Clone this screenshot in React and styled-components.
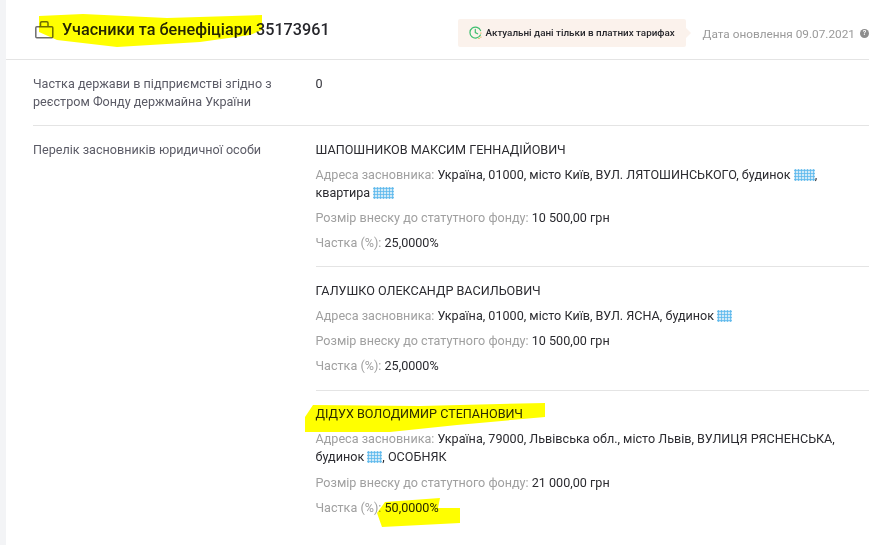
import React from "react";
import styled, { createGlobalStyle } from "styled-components";

const Global = createGlobalStyle`
  html, body { margin: 0; padding: 0; background: #fff; }
  body { font-family: Roboto, "Liberation Sans", sans-serif; overflow: hidden; }
`;
const Page = styled.div`
  position: relative;
  width: 869px;
  height: 545px;
  overflow: hidden;
  background: #fff;
  border-left: 6px solid #f3f4f6;
  box-sizing: border-box;
`;
const Header = styled.header`
  height: 59px;
  display: flex;
  align-items: center;
  padding: 0 0 0 29px;
  border-bottom: 1px solid #e4e4e4;
`;
const Title = styled.h1`
  margin: 0 0 0 8px;
  font-size: 16.2px;
  font-weight: 500;
  color: #26262b;
  line-height: 20px;
  white-space: nowrap;
`;
const Notice = styled.div`
  position: relative;
  margin-left: auto;
  margin-top: 6px;
  height: 28px;
  width: 228px;
  padding-left: 11px;
  box-sizing: border-box;
  display: flex;
  align-items: center;
  gap: 4px;
  background: #fbf2ec;
  border-radius: 2px;
  font-size: 9.85px;
  font-weight: 500;
  color: #26262b;
  white-space: nowrap;
  &::after {
    content: "";
    position: absolute;
    right: -5px;
    top: 9px;
    border-left: 5px solid #fbf2ec;
    border-top: 5px solid transparent;
    border-bottom: 5px solid transparent;
  }
`;
const Updated = styled.div`
  margin-left: 17px;
  margin-top: 8px;
  display: flex;
  align-items: center;
  gap: 5px;
  font-size: 11.8px;
  color: #9a9a9a;
  white-space: nowrap;
`;
const Help = styled.span`
  width: 9px;
  height: 9px;
  border-radius: 50%;
  background: #8d8d8d;
  color: #fff;
  font-size: 7px;
  font-weight: 700;
  line-height: 9px;
  text-align: center;
`;
const Row = styled.section`
  margin-left: 27px;
  display: grid;
  grid-template-columns: 282px 1fr;
  padding-top: ${p => p.$top}px;
  padding-bottom: ${p => p.$bottom}px;
  border-bottom: ${p => (p.$line ? "1px solid #e4e4e4" : "none")};
  font-size: 12.6px;
  line-height: 18px;
`;
const Label = styled.div`
  color: #5b5b66;
  width: 250px;
`;
const Value = styled.div`
  color: #33333a;
  padding-left: 0.5px;
`;
const Founder = styled.article`
  padding: 0 0 ${p => p.$bottom}px;
  margin-bottom: ${p => p.$after}px;
  border-bottom: ${p => (p.$line ? "1px solid #e4e4e4" : "none")};
  width: 560px;
  display: flex;
  flex-direction: column;
  gap: 7px;
`;
const Name = styled.div`
  color: #2b2b30;
`;
const Line = styled.div`
  color: #2b2b30;
  width: 530px;
  margin-bottom: ${p => p.$after || 0}px;
`;
const Key = styled.span`
  color: #a0a0a0;
`;
const Mask = styled.span`
  display: inline-block;
  width: ${p => p.$w}px;
  height: 12px;
  vertical-align: -2px;
  background-image: radial-gradient(circle at 1.5px 1.5px, #5fb9ec 0.9px, #e3f3fb 1.5px);
  background-size: 3px 3px;
`;
const Marks = styled.svg`
  position: absolute;
  left: -6px;
  top: 0;
  width: 869px;
  height: 545px;
  mix-blend-mode: multiply;
  pointer-events: none;
`;

const Briefcase = () => (
  <svg width="19" height="18" viewBox="0 0 19 18" fill="none" stroke="#6e6e6e" strokeWidth="1.5">
    <rect x="0.8" y="5.8" width="17" height="11" rx="1" />
    <path d="M5.5 5.8V2C5.5 1.3 6 .8 6.7.8h5.1c.7 0 1.2.5 1.2 1.2v3.8" />
  </svg>
);
const Clock = () => (
  <svg width="13" height="13" viewBox="0 0 13 13" fill="none" strokeWidth="1.2" strokeLinecap="round">
    <path d="M11.4 9A5.5 5.5 0 1 1 11.6 4.6" stroke="#3fbf6f" />
    <path d="M6.3 3.4V6.6L8.6 7.8" stroke="#3fbf6f" />
    <path d="M11.9 7v.1M11.9 11v.1M10 12.3v.1" stroke="#d8a12c" />
  </svg>
);

const App = () => (
  <Page>
    <Global />
    <Header>
      <Briefcase />
      <Title>Учасники та бенефіціари 35173961</Title>
      <Notice><Clock />Актуальні дані тільки в платних тарифах</Notice>
      <Updated>Дата оновлення 09.07.2021 <Help>?</Help></Updated>
    </Header>
    <Row $top={15} $bottom={14} $line>
      <Label>Частка держави в підприємстві згідно з реєстром Фонду держмайна України</Label>
      <Value>0</Value>
    </Row>
    <Row $top={15} $bottom={0}>
      <Label>Перелік засновників юридичної особи</Label>
      <Value>
        <Founder $bottom={14} $after={15} $line>
          <Name>ШАПОШНИКОВ МАКСИМ ГЕННАДІЙОВИЧ</Name>
          <Line><Key>Адреса засновника:</Key> Україна, 01000, місто Київ, ВУЛ. ЛЯТОШИНСЬКОГО, будинок <Mask $w={21} />, квартира <Mask $w={21} /></Line>
          <Line><Key>Розмір внеску до статутного фонду:</Key> 10 500,00 грн</Line>
          <Line><Key>Частка (%):</Key> 25,0000%</Line>
        </Founder>
        <Founder $bottom={15} $after={14} $line>
          <Name>ГАЛУШКО ОЛЕКСАНДР ВАСИЛЬОВИЧ</Name>
          <Line><Key>Адреса засновника:</Key> Україна, 01000, місто Київ, ВУЛ. ЯСНА, будинок <Mask $w={15} /></Line>
          <Line><Key>Розмір внеску до статутного фонду:</Key> 10 500,00 грн</Line>
          <Line><Key>Частка (%):</Key> 25,0000%</Line>
        </Founder>
        <Founder $bottom={0} $after={0}>
          <Name>ДІДУХ ВОЛОДИМИР СТЕПАНОВИЧ</Name>
          <Line $after={1}><Key>Адреса засновника:</Key> Україна, 79000, Львівська обл., місто Львів, ВУЛИЦЯ РЯСНЕНСЬКА, будинок <Mask $w={15} />, ОСОБНЯК</Line>
          <Line><Key>Розмір внеску до статутного фонду:</Key> 21 000,00 грн</Line>
          <Line><Key>Частка (%):</Key> 50,0000%</Line>
        </Founder>
      </Value>
    </Row>
    <Marks viewBox="0 0 869 545">
      <path d="M39 16 L83 14 L167 18 L262 15 L262 30 L250 35 L200 42 L117 47 L57 40 L39 32 Z" fill="#ffff00" />
      <path d="M313 405 L420 406 L500 404 L545 403 L545 417 L457 425 L390 432 L305 432 L305 417 Z" fill="#ffff00" />
      <path d="M385 502 L440 498 L438 508 L460 508 L460 523 L382 527 L377 513 Z" fill="#ffff00" />
    </Marks>
  </Page>
);
export default App;
